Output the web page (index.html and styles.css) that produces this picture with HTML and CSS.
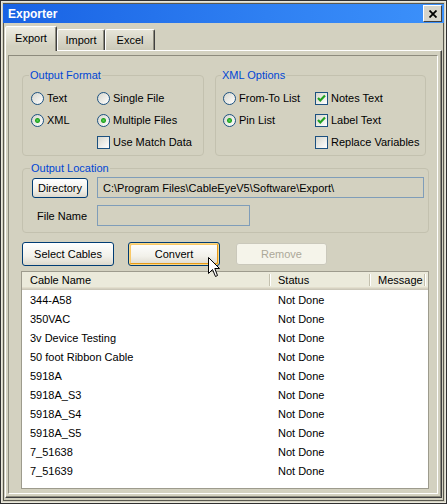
FILE: index.html
```html
<!DOCTYPE html>
<html>
    <head>
        <title>Exporter</title>
        <link rel="stylesheet" href="styles.css">
    </head>
    <body>
        <div class="window">
            <div class="titlebar">
                <span class="title">Exporter</span>
                <span class="closebtn">
                    <svg width="8" height="8" viewBox="0 0 8 8"><path d="M0.5 0.5 L7.5 7.5 M7.5 0.5 L0.5 7.5" stroke="#000" stroke-width="1.8"/></svg>
                </span>
            </div>
            <div class="tabs">
                <div class="tab active tab-export">Export</div>
                <div class="tab tab-import">Import</div>
                <div class="tab tab-excel">Excel</div>
            </div>
            <div class="panel">
                <div class="inner">
                    <div class="options">
                        <fieldset class="group format">
                            <legend>Output Format</legend>
                            <div class="optgrid">
                                <div class="opt"><span class="radio"></span>Text</div>
                                <div class="opt"><span class="radio"></span>Single File</div>
                                <div class="opt"><span class="radio on"></span>XML</div>
                                <div class="opt"><span class="radio on"></span>Multiple Files</div>
                                <div></div>
                                <div class="opt"><span class="check"></span>Use Match Data</div>
                            </div>
                        </fieldset>
                        <fieldset class="group xml">
                            <legend>XML Options</legend>
                            <div class="optgrid">
                                <div class="opt"><span class="radio"></span>From-To List</div>
                                <div class="opt"><span class="check"><svg width="11" height="11" viewBox="0 0 11 11"><path d="M2 5 L4.3 7.5 L9 2.5" fill="none" stroke="#21a121" stroke-width="2.2"/></svg></span>Notes Text</div>
                                <div class="opt"><span class="radio on"></span>Pin List</div>
                                <div class="opt"><span class="check"><svg width="11" height="11" viewBox="0 0 11 11"><path d="M2 5 L4.3 7.5 L9 2.5" fill="none" stroke="#21a121" stroke-width="2.2"/></svg></span>Label Text</div>
                                <div></div>
                                <div class="opt"><span class="check"></span>Replace Variables</div>
                            </div>
                        </fieldset>
                    </div>
                    <fieldset class="group location">
                        <legend>Output Location</legend>
                        <div class="locgrid">
                            <div class="btn dirbtn">Directory</div>
                            <div class="textbox">C:\Program Files\CableEyeV5\Software\Export\</div>
                            <div class="fnlabel">File Name</div>
                            <div class="textbox filebox"></div>
                        </div>
                    </fieldset>
                    <div class="actions">
                        <div class="btn bigbtn">Select Cables</div>
                        <div class="btn bigbtn hot">Convert</div>
                        <div class="btn bigbtn disabled">Remove</div>
                    </div>
                    <div class="listbox">
                        <div class="lhead">
                            <div class="c1">Cable Name</div>
                            <div class="c2">Status</div>
                            <div class="c3">Message</div>
                        </div>
                        <div class="lrow"><div class="c1">344-A58</div><div class="c2">Not Done</div><div class="c3"></div></div>
                        <div class="lrow"><div class="c1">350VAC</div><div class="c2">Not Done</div><div class="c3"></div></div>
                        <div class="lrow"><div class="c1">3v Device Testing</div><div class="c2">Not Done</div><div class="c3"></div></div>
                        <div class="lrow"><div class="c1">50 foot Ribbon Cable</div><div class="c2">Not Done</div><div class="c3"></div></div>
                        <div class="lrow"><div class="c1">5918A</div><div class="c2">Not Done</div><div class="c3"></div></div>
                        <div class="lrow"><div class="c1">5918A_S3</div><div class="c2">Not Done</div><div class="c3"></div></div>
                        <div class="lrow"><div class="c1">5918A_S4</div><div class="c2">Not Done</div><div class="c3"></div></div>
                        <div class="lrow"><div class="c1">5918A_S5</div><div class="c2">Not Done</div><div class="c3"></div></div>
                        <div class="lrow"><div class="c1">7_51638</div><div class="c2">Not Done</div><div class="c3"></div></div>
                        <div class="lrow"><div class="c1">7_51639</div><div class="c2">Not Done</div><div class="c3"></div></div>
                    </div>
                </div>
            </div>
            <!-- mouse pointer resting on the Convert button -->
            <svg class="cursor" width="13" height="21" viewBox="0 0 13 21"><path d="M0.5 0.5 L0.5 16.5 L4.5 12.5 L7.5 19.5 L9.5 18.5 L6.8 11.5 L11.5 11.5 Z" fill="#fff" stroke="#000" stroke-width="1"/></svg>
        </div>
    </body>
</html>
```

FILE: styles.css
```css
html, body{
    margin: 0;
    padding: 0;
}
body{
    background-color: #d3d1c0;
    font-family: "Liberation Sans", Arial, sans-serif;
    font-size: 11px;
    color: #000;
}
.window{
    position: relative;
    width: 447px;
    height: 504px;
    box-sizing: border-box;
    border: 1px solid #303030;
    padding: 2px;
    display: flex;
    flex-direction: column;
    background-color: #d3d1c0;
    box-shadow: inset 0 0 0 1px #e9e7dc, inset 0 0 0 2px #d3d1c0, inset 0 0 0 3px #5a5950;
}
.titlebar{
    height: 19px;
    margin-top: 1px;
    display: flex;
    align-items: center;
    padding: 0 2px 0 5px;
    background: linear-gradient(to right, #1862e4, #2f80f2 60%, #3c91fb);
}
.title{
    color: white;
    font-weight: bold;
    font-size: 12px;
}
.closebtn{
    margin-left: auto;
    width: 19px;
    height: 17px;
    box-sizing: border-box;
    border: 1px solid;
    border-color: #fff #404040 #404040 #fff;
    background-color: #d6d4ca;
    display: flex;
    justify-content: center;
    align-items: center;
}
.tabs{
    display: flex;
    align-items: flex-end;
    height: 24px;
    margin: 3px 0 0 2px;
    position: relative;
    z-index: 1;
}
.tab{
    box-sizing: border-box;
    height: 21px;
    border: 1px solid;
    border-bottom: none;
    border-color: #fff #404040 transparent #fff;
    box-shadow: inset -1px 0 #8d8b7d;
    border-radius: 2px 2px 0 0;
    background: linear-gradient(#e6e4d8, #cbc9b8);
    display: flex;
    justify-content: center;
    align-items: center;
}
.tab.active{
    height: 25px;
    margin-bottom: -1px;
    background: linear-gradient(#eeede3, #d3d1c0 80%);
    padding-bottom: 2px;
}
.tab-export{ width: 52px; }
.tab-import{ width: 48px; }
.tab-excel{ width: 50px; }
.panel{
    flex: 1;
    margin: 0 2px 3px 2px;
    border: 1px solid;
    border-color: #fff #404040 #404040 #fff;
    box-shadow: inset -1px -1px #8d8b7d;
    padding: 4px 3px 3px 2px;
    display: flex;
}
.inner{
    flex: 1;
    border: 1px solid;
    border-color: #8d8b7d #fff #fff #8d8b7d;
    padding: 12px 4px 0 13px;
    display: flex;
    flex-direction: column;
}
.options{
    display: flex;
    gap: 11px;
}
.group{
    margin: 0;
    border: 1px solid #c3c1af;
    border-radius: 4px;
    min-width: 0;
}
.group legend{
    color: #0046d5;
    line-height: 14px;
    padding: 0 1px;
    margin-left: -2px;
}
.format{
    width: 182px;
    box-sizing: border-box;
    padding: 5px 0 2px 8px;
}
.xml{
    width: 211px;
    box-sizing: border-box;
    padding: 5px 0 2px 7px;
}
.optgrid{
    display: grid;
    grid-template-columns: 66px auto;
    grid-auto-rows: 22px;
    align-items: center;
}
.xml .optgrid{
    grid-template-columns: 92px auto;
}
.opt{
    display: flex;
    align-items: center;
    white-space: nowrap;
}
.radio{
    width: 13px;
    height: 13px;
    box-sizing: border-box;
    border: 1px solid #1c5180;
    border-radius: 50%;
    background: linear-gradient(135deg, #d6d6cd, #fff);
    margin-right: 3px;
    flex: none;
}
.radio.on{
    background: radial-gradient(circle, #5ad457 0, #21a121 2px, transparent 3px), linear-gradient(135deg, #d6d6cd, #fff);
}
.check{
    width: 13px;
    height: 13px;
    box-sizing: border-box;
    border: 1px solid #1c5180;
    background: linear-gradient(135deg, #d6d6cd, #fff);
    margin-right: 3px;
    flex: none;
    display: flex;
}
.location{
    width: 407px;
    box-sizing: border-box;
    margin-top: 5px;
    padding: 2px 4px 6px 9px;
}
.locgrid{
    display: grid;
    grid-template-columns: 65px 1fr;
    grid-auto-rows: 21px;
    row-gap: 7px;
    align-items: center;
}
.btn{
    box-sizing: border-box;
    border: 1px solid #003c74;
    border-radius: 3px;
    background: linear-gradient(#ffffff, #f2f1ea 60%, #dcd8cc);
    display: flex;
    justify-content: center;
    align-items: center;
    white-space: nowrap;
}
.dirbtn{
    width: 56px;
    height: 20px;
}
.textbox{
    height: 21px;
    box-sizing: border-box;
    border: 1px solid #7f9db9;
    padding-left: 5px;
    display: flex;
    align-items: center;
    white-space: nowrap;
}
.fnlabel{
    padding-left: 5px;
}
.filebox{
    width: 153px;
}
.actions{
    display: flex;
    align-items: center;
    margin-top: 9px;
    height: 24px;
}
.bigbtn{
    width: 92px;
    height: 24px;
}
.hot{
    margin-left: 14px;
    box-shadow: inset 0 0 0 1px #fbd884, inset -1px -1px 0 1px #e69a1a, inset 1px 1px 0 1px #f9c866;
}
.disabled{
    margin-left: 16px;
    height: 22px;
    width: 91px;
    border-color: #cac8bb;
    background: #f5f4ea;
    color: #aca899;
}
.listbox{
    flex: 1;
    margin: 5px 0 4px -1px;
    width: 408px;
    box-sizing: border-box;
    border: 1px solid #9d9b8d;
    background-color: white;
    overflow: hidden;
}
.lhead, .lrow{
    display: flex;
    align-items: center;
}
.lhead{
    height: 18px;
    box-sizing: border-box;
    padding-bottom: 2px;
    background-color: #ebeadb;
    box-shadow: inset 0 -1px #cbc7b8, inset 0 -2px #d6d2c2, inset 0 -3px #e2decd;
}
.lhead > div{
    height: 100%;
    display: flex;
    align-items: center;
    box-sizing: border-box;
    background: linear-gradient(to right, #c4c1af 1px, #fff 1px) no-repeat right 0 top 2px / 2px 12px;
}
.lrow{
    height: 19px;
}
.c1{
    width: 249px;
    padding-left: 8px;
    box-sizing: border-box;
}
.c2{
    width: 100px;
    padding-left: 7px;
    box-sizing: border-box;
}
.c3{
    width: 55px;
    padding-left: 7px;
    box-sizing: border-box;
}
.cursor{
    position: absolute;
    left: 207px;
    top: 256px;
}
```
